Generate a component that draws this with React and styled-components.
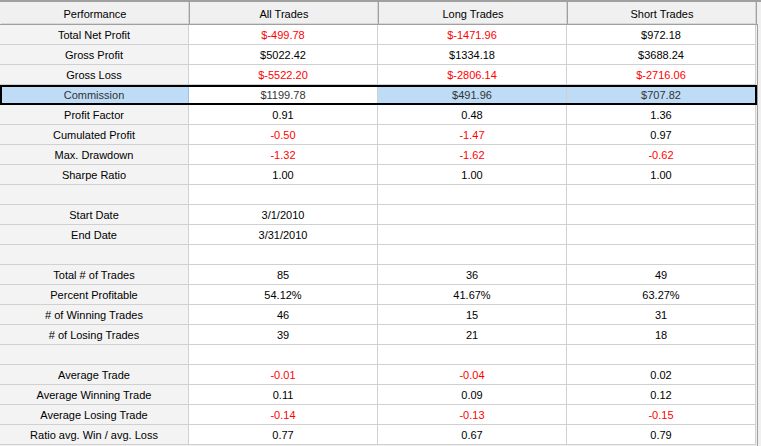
import React from "react";
import { styled, createGlobalStyle } from "styled-components";

const GlobalStyle = createGlobalStyle`
  html, body {
    margin: 0;
    padding: 0;
    background: #f0f0f0;
  }
  body {
    font-family: "Liberation Sans", Arial, sans-serif;
    font-size: 11px;
  }
`;

const Frame = styled.div`
  display: flex;
  width: 761px;
  height: 446px;
  overflow: hidden;
  background: #f0f0f0;
  border-top: 2px solid #a0a0a0;
  box-sizing: border-box;
`;

const Grid = styled.div`
  width: 757px;
  display: flex;
  flex-direction: column;
  background: #f0f0f0;
`;

const ScrollEdge = styled.div`
  flex: 1;
  margin-top: 22px;
  border-left: 1px solid #a0a0a0;
  background: #f0f0f0;
`;

const HeaderRow = styled.div`
  display: grid;
  grid-template-columns: repeat(4, 189px);
  height: 23px;
  border-bottom: 1px solid #a0a0a0;
  box-sizing: border-box;
  background: #f0f0f0;
  padding-left: 1px;
`;

const HeaderCell = styled.div`
  display: flex;
  align-items: center;
  justify-content: center;
  padding-top: 2px;
  color: #000;
  border-right: 1px solid #a0a0a0;
  box-shadow: inset -1px 0 0 #d4d4d4, inset 0 -1px 0 #d8d8d8;
`;

const Row = styled.div`
  position: relative;
  display: grid;
  grid-template-columns: repeat(4, 189px);
  height: 20px;

  &::after {
    content: "";
    display: ${(p) => (p.$selected ? "block" : "none")};
    position: absolute;
    inset: 0 0 0 0;
    border: 2px solid #000;
    pointer-events: none;
  }
`;

const Cell = styled.div`
  display: flex;
  align-items: center;
  justify-content: center;
  box-sizing: border-box;
  border-right: 1px solid #d0d0d0;
  border-bottom: 1px solid #d0d0d0;
  padding-top: 1px;
  color: ${(p) => (p.$negative ? "#ff0000" : p.$selected ? "#333" : "#000")};
  background: ${(p) =>
    p.$selected && p.$highlight
      ? "#bedcf6"
      : p.$label
      ? "#f3f3f3"
      : "#ffffff"};
  ${(p) => p.$selected && p.$highlight && p.$label && "border-right-color: #98c2ea;"}
`;

const columns = ["Performance", "All Trades", "Long Trades", "Short Trades"];

const rows = [
  ["Total Net Profit", "$-499.78", "$-1471.96", "$972.18"],
  ["Gross Profit", "$5022.42", "$1334.18", "$3688.24"],
  ["Gross Loss", "$-5522.20", "$-2806.14", "$-2716.06"],
  ["Commission", "$1199.78", "$491.96", "$707.82"],
  ["Profit Factor", "0.91", "0.48", "1.36"],
  ["Cumulated Profit", "-0.50", "-1.47", "0.97"],
  ["Max. Drawdown", "-1.32", "-1.62", "-0.62"],
  ["Sharpe Ratio", "1.00", "1.00", "1.00"],
  ["", "", "", ""],
  ["Start Date", "3/1/2010", "", ""],
  ["End Date", "3/31/2010", "", ""],
  ["", "", "", ""],
  ["Total # of Trades", "85", "36", "49"],
  ["Percent Profitable", "54.12%", "41.67%", "63.27%"],
  ["# of Winning Trades", "46", "15", "31"],
  ["# of Losing Trades", "39", "21", "18"],
  ["", "", "", ""],
  ["Average Trade", "-0.01", "-0.04", "0.02"],
  ["Average Winning Trade", "0.11", "0.09", "0.12"],
  ["Average Losing Trade", "-0.14", "-0.13", "-0.15"],
  ["Ratio avg. Win / avg. Loss", "0.77", "0.67", "0.79"],
];

const SELECTED = 3;

export default function App() {
  return (
    <>
      <GlobalStyle />
      <Frame>
        <Grid>
          <HeaderRow>
            {columns.map((c) => (
              <HeaderCell key={c}>{c}</HeaderCell>
            ))}
          </HeaderRow>
          {rows.map((r, i) => (
            <Row key={i} $selected={i === SELECTED}>
              {r.map((v, j) => (
                <Cell
                  key={j}
                  $label={j === 0}
                  $selected={i === SELECTED}
                  $highlight={j !== 1}
                  $negative={j > 0 && v.includes("-") && !v.includes("/")}
                >
                  {v}
                </Cell>
              ))}
            </Row>
          ))}
        </Grid>
        <ScrollEdge />
      </Frame>
    </>
  );
}
